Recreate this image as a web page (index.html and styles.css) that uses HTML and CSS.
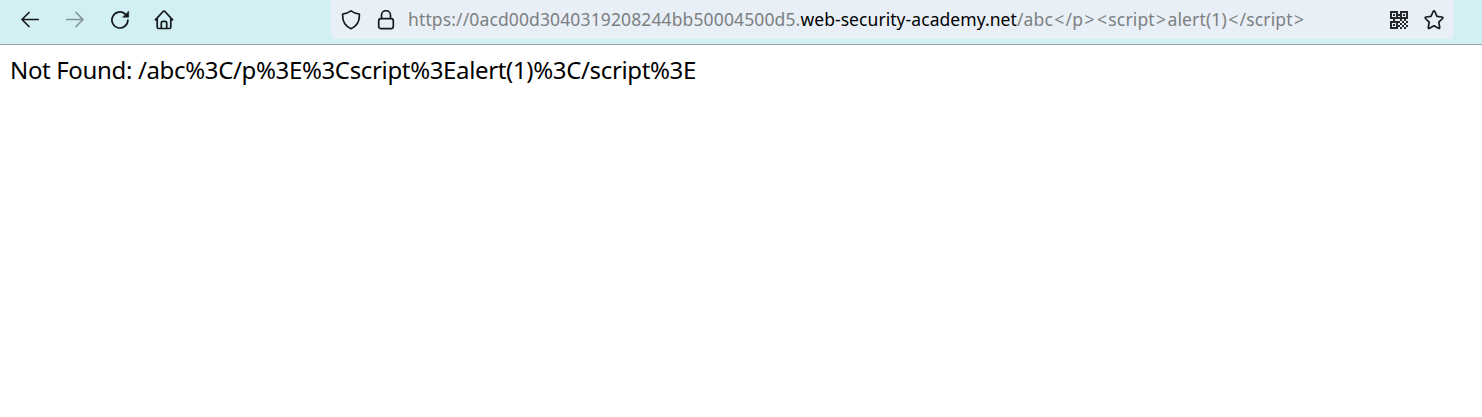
FILE: index.html
```
<!DOCTYPE html>
<html lang="en">
<head>
<meta charset="utf-8">
<title>Not Found</title>
<link rel="stylesheet" href="styles.css">
</head>
<body>
<header class="toolbar">
  <nav class="nav">
    <svg class="icon" viewBox="0 0 20 20"><path d="M18.2 9.500H2M9 2.500l-7 7 7 7"/></svg>
    <svg class="icon disabled" viewBox="0 0 20 20"><path d="M1.800 9.500H18M11 2.500l7 7-7 7"/></svg>
    <svg class="icon" viewBox="0 0 20 20"><path d="M17.900 10a8 8 0 1 1-2.700-6"/><path class="solid" d="M18.700 1.300v5.900h-5.900z"/></svg>
    <svg class="icon home" viewBox="0 0 20 20"><path d="M1.400 9.800 9.100 1.500Q10 .7 10.900 1.500l7.700 8.300M3.200 8v9q0 1.500 1.500 1.500h10.600q1.500 0 1.500-1.500V8M7.300 18.500v-5.500q0-1.700 1.700-1.700h2q1.700 0 1.700 1.700v5.500"/></svg>
  </nav>
  <div class="urlbar">
    <svg class="icon" viewBox="0 0 20 20"><path d="M10 .9c2.400 1.800 5 2.700 8.300 3.100.5 6.300-1.300 11.700-8.300 14.700C3 15.700 1.200 10.300 1.700 4 5 3.600 7.600 2.700 10 .9z"/></svg>
    <svg class="icon lock" viewBox="0 0 20 20"><rect x="2.700" y="8.700" width="14.600" height="9.900" rx="2.200"/><path d="M5.500 8.500V5.200a4.500 4.500 0 0 1 9 0v3.300"/></svg>
    <div class="url"><span class="sub">https://0acd00d3040319208244bb50004500d5.</span><span class="domain">web-security-academy.net</span><span class="path">/abc<span class="angle">&lt;</span>/p<span class="angle">&gt;</span><span class="angle">&lt;</span>script<span class="angle">&gt;</span>alert(1)<span class="angle">&lt;</span>/script<span class="angle">&gt;</span></span></div>
    <svg class="qr" viewBox="0 0 18 18"><path class="frame" d="M1 1h6v6H1zM11 1h6v6h-6zM1 11h6v6H1z"/><path class="cells" d="M3 3h2v2H3zM13 3h2v2h-2zM3 13h2v2H3zM8 3h2v2H8zM8 6h2v2H8zM3 8h2v2H3zM8 10h2v2H8zM10 8h2v2h-2zM14 8h2v2h-2zM12 10h2v2h-2zM16 10h2v2h-2zM10 12h2v2h-2zM14 12h2v2h-2zM12 14h2v2h-2zM16 14h2v2h-2zM8 14h2v2H8zM10 16h2v2h-2zM14 16h2v2h-2z"/></svg>
    <svg class="icon star" viewBox="0 0 20 20"><path d="M9.200 1.500q.8-1.300 1.600 0l2.200 4.800 5 .7q1.500.3.500 1.500l-3.700 3.600.9 5.200q.2 1.600-1.200.9L10 15.700l-4.500 2.500q-1.400.7-1.200-.9l.9-5.200L1.500 8.500q-1-1.200.5-1.500l5-.7z"/></svg>
  </div>
</header>
<main class="message">Not Found: /abc%3C/p%3E%3Cscript%3Ealert(1)%3C/script%3E</main>
</body>
</html>
```
FILE: styles.css
```
body {
  margin: 0;
  background: #fff;
  color: #000;
  font-family: "Noto Sans", "Open Sans", sans-serif;
}
.toolbar {
  box-sizing: border-box;
  display: flex;
  justify-content: space-between;
  height: 45px;
  padding: 0 28px 0 20px;
  background: #d2eff3;
  border-bottom: 1px solid #93a5a8;
}
.nav {
  display: flex;
  gap: 25px;
  height: 40px;
  align-items: center;
}
.icon {
  flex: none;
  width: 20px;
  height: 20px;
  fill: none;
  stroke: #15191b;
  stroke-width: 1.7;
  stroke-linecap: round;
  stroke-linejoin: round;
}
.disabled {
  opacity: 0.42;
}
.home {
  margin-left: -1px;
}
.solid {
  fill: #15191b;
  stroke-width: 0.5;
}
.urlbar {
  box-sizing: border-box;
  display: flex;
  align-items: center;
  width: 1123px;
  height: 39px;
  padding: 0 10px;
  background: #e9eff6;
  border-radius: 0 0 5px 5px;
}
.lock {
  margin-left: 15px;
}
.url {
  flex: 1;
  margin-left: 12px;
  font-size: 17.5px;
  line-height: 37px;
  white-space: nowrap;
  color: #7c8082;
}
.sub {
  letter-spacing: 0.125px;
}
.domain {
  color: #000;
  letter-spacing: 0.06px;
}
.path {
  letter-spacing: 0.16px;
}
.angle {
  padding: 0 1.2px;
}
.qr {
  width: 18px;
  height: 18px;
  margin-right: 16px;
}
.frame {
  fill: none;
  stroke: #25292c;
  stroke-width: 2;
}
.cells {
  fill: #25292c;
}
.message {
  padding: 8px 10px;
  font-size: 24px;
  line-height: 34px;
  letter-spacing: -0.35px;
  white-space: nowrap;
}
```
